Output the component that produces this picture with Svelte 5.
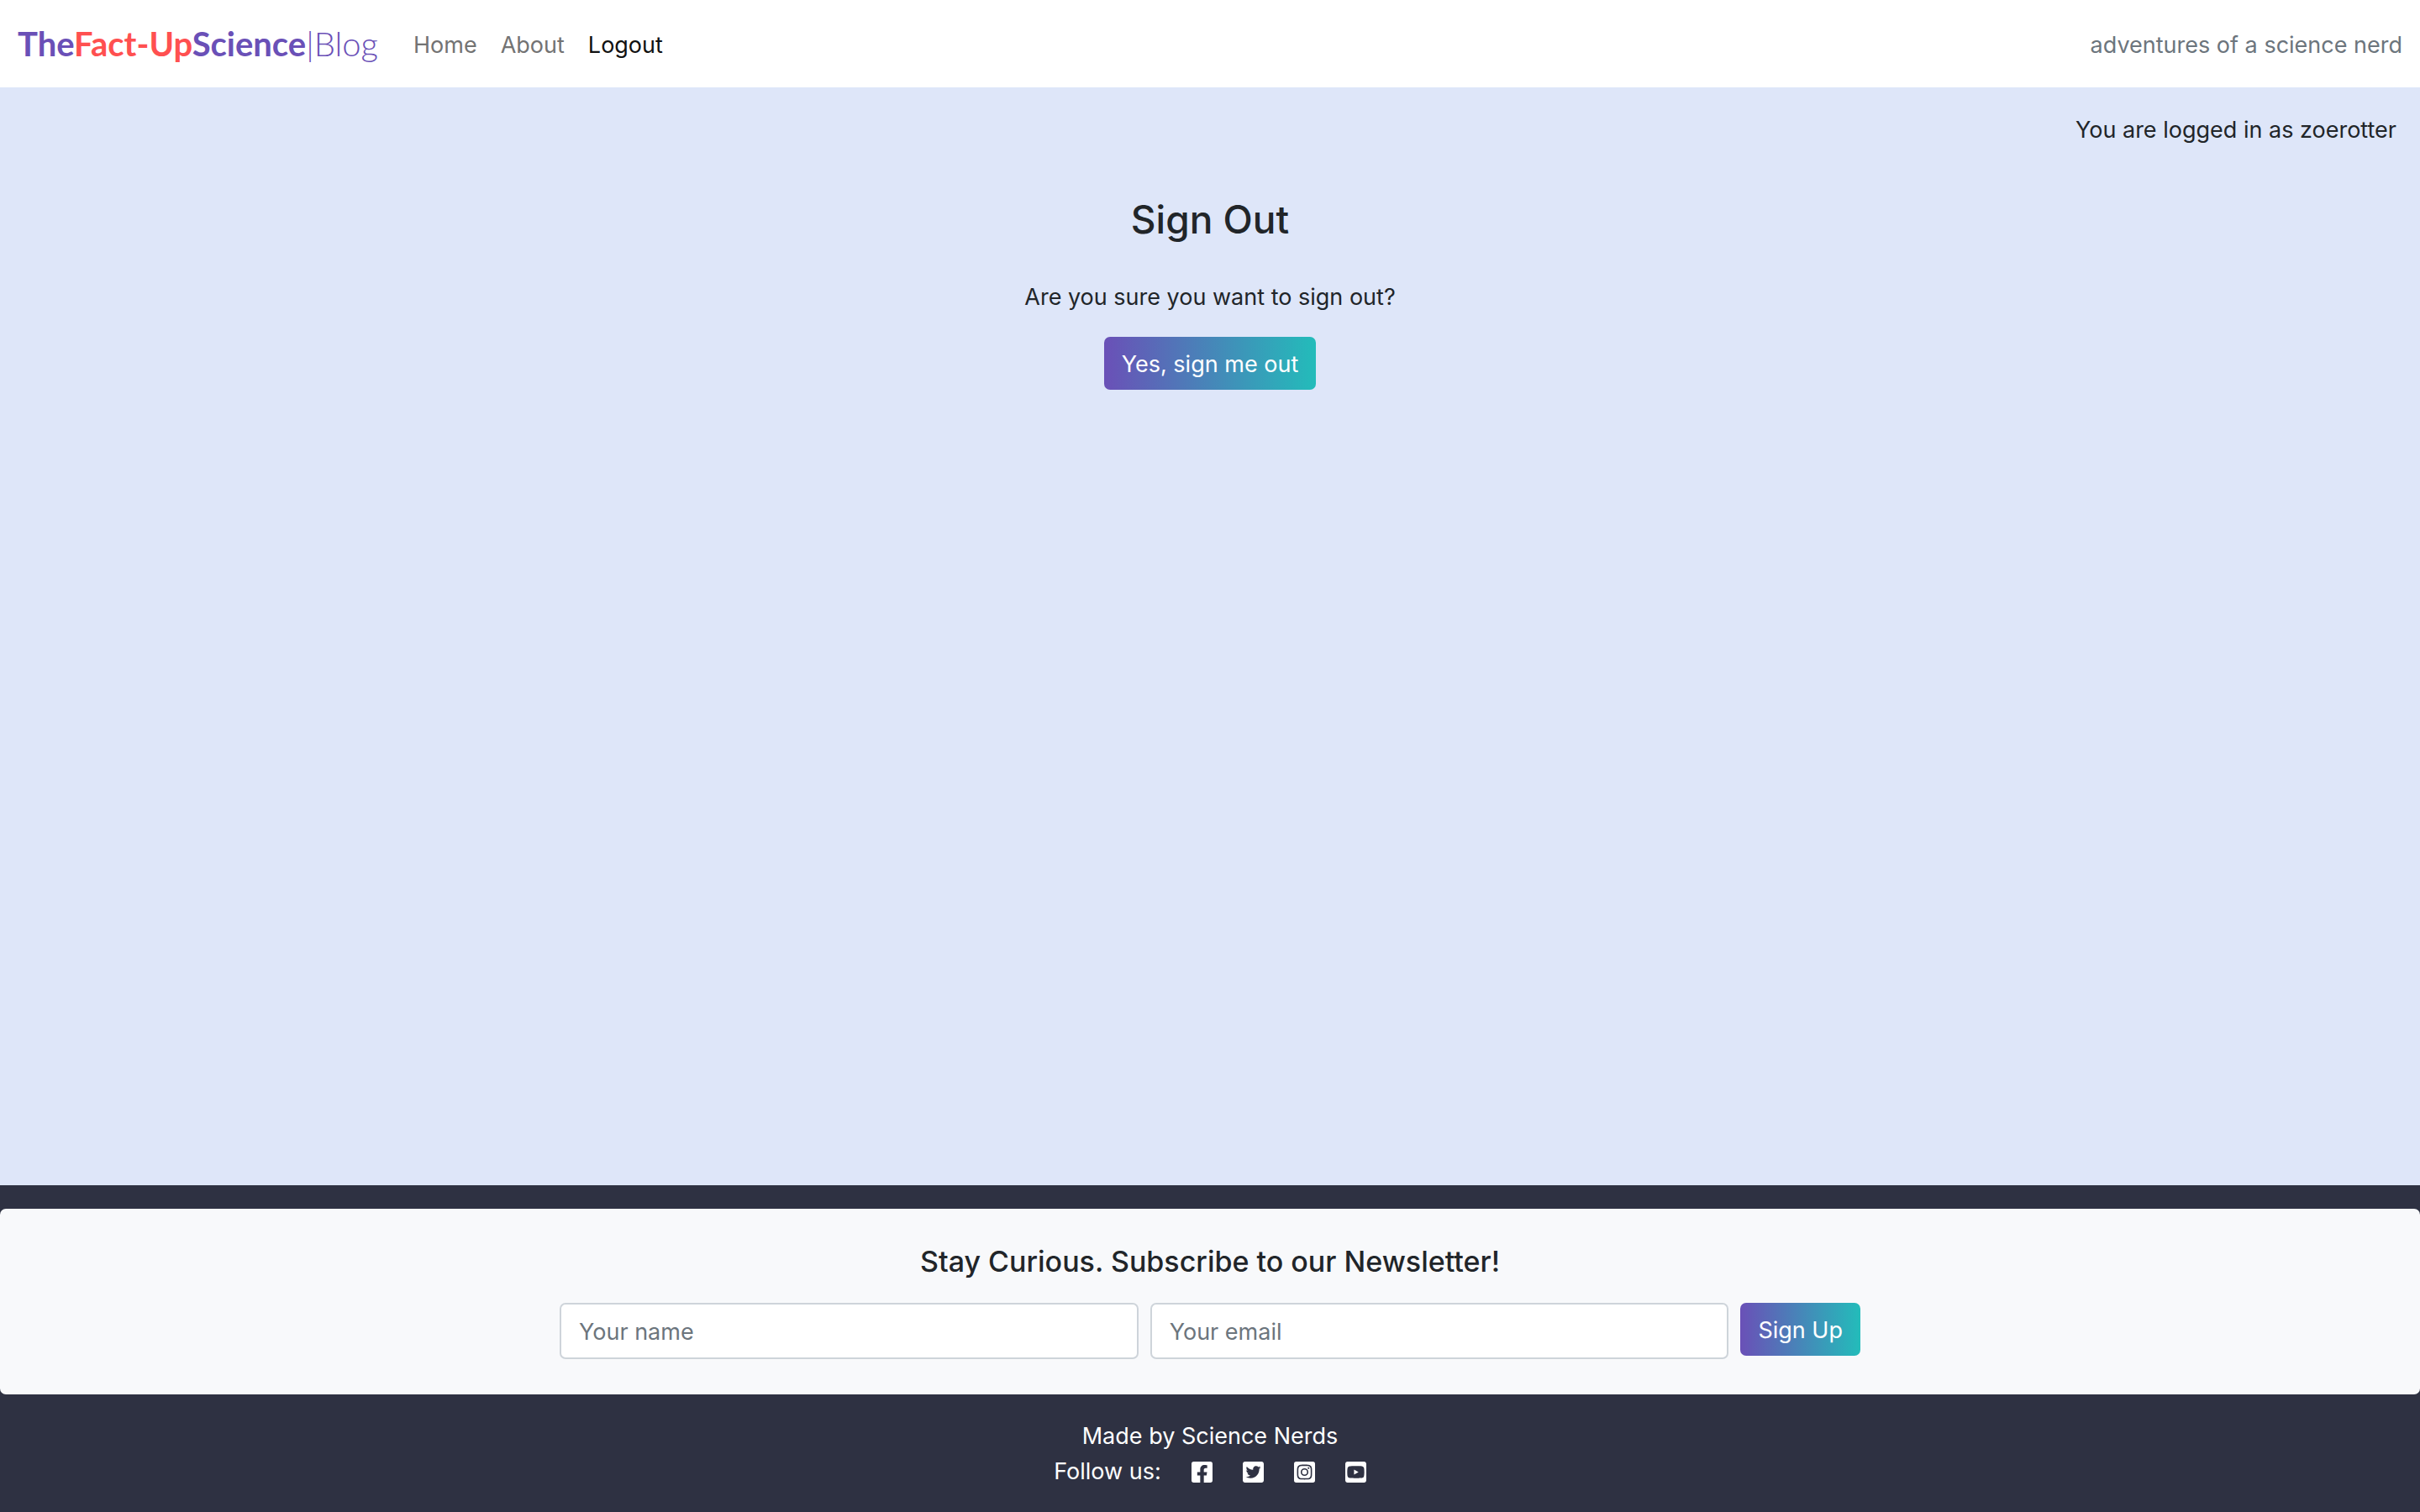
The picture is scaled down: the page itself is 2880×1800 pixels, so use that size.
<script>
  const links = [
    { label: 'Home', active: false },
    { label: 'About', active: false },
    { label: 'Logout', active: true }
  ];

  const socials = [
    {
      name: 'Facebook',
      path: 'M400 32H48A48 48 0 0 0 0 80v352a48 48 0 0 0 48 48h137.25V327.69h-63V256h63v-54.64c0-62.15 37-96.48 93.67-96.48 27.14 0 55.52 4.84 55.52 4.84v61h-31.27c-30.81 0-40.42 19.12-40.42 38.73V256h68.78l-11 71.69h-57.78V480H400a48 48 0 0 0 48-48V80a48 48 0 0 0-48-48z'
    },
    {
      name: 'Twitter',
      path: 'M400 32H48C21.5 32 0 53.5 0 80v352c0 26.5 21.5 48 48 48h352c26.5 0 48-21.5 48-48V80c0-26.5-21.5-48-48-48zm-48.9 158.8c.2 2.8.2 5.7.2 8.5 0 86.7-66 186.6-186.6 186.6-37.2 0-71.7-10.8-100.7-29.4 5.3.6 10.4.8 15.8.8 30.7 0 58.9-10.4 81.4-28-28.8-.6-53-19.5-61.3-45.5 10.1 1.5 19.2 1.5 29.6-1.2-30-6.1-52.5-32.5-52.5-64.4v-.8c8.7 4.9 18.9 7.9 29.6 8.3a65.447 65.447 0 0 1-29.2-54.6c0-12.2 3.2-23.4 8.9-33.1 32.3 39.8 80.8 65.8 135.2 68.6-9.3-44.5 24-80.6 64-80.6 18.9 0 35.9 7.9 47.9 20.7 14.8-2.8 29-8.3 41.6-15.8-4.9 15.2-15.2 28-28.8 36.1 13.2-1.4 26-5.1 37.8-10.2-8.9 13.1-20.1 24.7-32.9 34z'
    },
    {
      name: 'Instagram',
      path: 'M224,202.66A53.34,53.34,0,1,0,277.36,256,53.38,53.38,0,0,0,224,202.66Zm124.71-41a54,54,0,0,0-30.41-30.41c-21-8.29-71-6.43-94.3-6.43s-73.25-1.93-94.31,6.43a54,54,0,0,0-30.41,30.41c-8.28,21-6.43,71.05-6.43,94.33S91,329.26,99.32,350.33a54,54,0,0,0,30.41,30.41c21,8.29,71,6.43,94.31,6.43s73.24,1.93,94.3-6.43a54,54,0,0,0,30.41-30.41c8.35-21,6.43-71.05,6.43-94.33S357.1,182.74,348.75,161.67ZM224,338a82,82,0,1,1,82-82A81.9,81.9,0,0,1,224,338Zm85.38-148.3a19.14,19.14,0,1,1,19.13-19.14A19.1,19.1,0,0,1,309.42,189.74ZM400,32H48A48,48,0,0,0,0,80V432a48,48,0,0,0,48,48H400a48,48,0,0,0,48-48V80A48,48,0,0,0,400,32ZM382.88,322c-1.29,25.63-7.14,48.34-25.85,67s-41.4,24.63-67,25.85c-26.41,1.49-105.59,1.49-132,0-25.63-1.29-48.26-7.15-67-25.85s-24.63-41.42-25.85-67c-1.49-26.42-1.49-105.61,0-132,1.29-25.63,7.07-48.34,25.85-67s41.47-24.56,67-25.78c26.41-1.49,105.59-1.49,132,0,25.63,1.29,48.33,7.15,67,25.85s24.63,41.42,25.85,67.05C384.37,216.44,384.37,295.56,382.88,322Z'
    },
    {
      name: 'YouTube',
      path: 'M186.8 202.1l95.2 54.1-95.2 54.1V202.1zM448 80v352c0 26.5-21.5 48-48 48H48c-26.5 0-48-21.5-48-48V80c0-26.5 21.5-48 48-48h352c26.5 0 48 21.5 48 48zm-42 176.3s0-59.6-7.6-88.2c-4.2-15.8-16.5-28.2-32.2-32.4C337.9 128 224 128 224 128s-113.9 0-142.2 7.7c-15.7 4.2-28 16.6-32.2 32.4-7.6 28.5-7.6 88.2-7.6 88.2s0 59.6 7.6 88.2c4.2 15.8 16.5 27.7 32.2 31.9C110.1 384 224 384 224 384s113.9 0 142.2-7.7c15.7-4.2 28-16.1 32.2-31.9 7.6-28.5 7.6-88.1 7.6-88.1z'
    }
  ];

  const keep = (event) => event.preventDefault();
</script>

<div class="page">
  <header class="navbar">
    <a class="brand" href="#home">The<span class="accent">Fact-Up</span>Science<span class="light">|Blog</span></a>
    <nav class="links" aria-label="Main">
      {#each links as link}
        <a href="#{link.label.toLowerCase()}" class:active={link.active} aria-current={link.active ? 'page' : undefined}>{link.label}</a>
      {/each}
    </nav>
    <span class="tagline">adventures of a science nerd</span>
  </header>

  <main>
    <p class="status">You are logged in as zoerotter</p>
    <form class="signout" onsubmit={keep}>
      <h1>Sign Out</h1>
      <p>Are you sure you want to sign out?</p>
      <button class="btn" type="submit">Yes, sign me out</button>
    </form>
  </main>

  <footer>
    <section class="newsletter">
      <h2>Stay Curious. Subscribe to our Newsletter!</h2>
      <form class="signup" onsubmit={keep}>
        <input type="text" placeholder="Your name" aria-label="Your name" />
        <input type="email" placeholder="Your email" aria-label="Your email" />
        <button class="btn" type="submit">Sign Up</button>
      </form>
    </section>
    <div class="credits">
      <p>Made by Science Nerds</p>
      <div class="follow">
        <span>Follow us:</span>
        <ul>
          {#each socials as social}
            <li>
              <a href="#{social.name.toLowerCase()}" aria-label={social.name}>
                <svg viewBox="0 32 448 448" aria-hidden="true"><path d={social.path} /></svg>
              </a>
            </li>
          {/each}
        </ul>
      </div>
    </div>
  </footer>
</div>

<style>
  :global(body) {
    margin: 0;
  }

  .page {
    display: flex;
    flex-direction: column;
    min-height: 100vh;
    background: #dee6f9;
    color: #212529;
    font-family: Inter, 'Liberation Sans', sans-serif;
    font-size: 27px;
    line-height: 42px;
  }

  h1,
  h2,
  p,
  ul {
    margin: 0;
    padding: 0;
  }

  a {
    text-decoration: none;
  }

  .navbar {
    display: flex;
    align-items: center;
    padding: 20px 21px;
    background: #fff;
  }

  .brand {
    margin-right: 28px;
    color: #6a50b7;
    font-family: Lato, sans-serif;
    font-size: 40px;
    font-weight: 700;
    line-height: 64px;
    white-space: nowrap;
  }

  .accent {
    color: #ff5050;
  }

  .light {
    font-weight: 300;
  }

  .links {
    display: flex;
    flex: 1;
    padding-top: 3px;
  }

  .links a {
    padding: 0 14px;
    color: #737373;
  }

  .links .active {
    color: #111;
  }

  .tagline {
    padding-top: 3px;
    color: #6c757d;
  }

  main {
    flex: 1;
    padding: 30px 28px 28px;
  }

  .status {
    text-align: right;
  }

  .signout {
    display: flex;
    flex-direction: column;
    align-items: center;
    margin-top: 55px;
  }

  h1 {
    margin-bottom: 42px;
    font-size: 46px;
    font-weight: 500;
    line-height: 60px;
  }

  .signout p {
    margin-bottom: 26px;
  }

  .btn {
    padding: 12px 21px 9px;
    border: 0;
    border-radius: 7px;
    background: linear-gradient(90deg, #6a50b7, #23bcba);
    color: #fff;
    font: inherit;
    white-space: nowrap;
    cursor: pointer;
  }

  footer {
    padding: 28px 0 27px;
    background: #2e3142;
    color: #fff;
  }

  .newsletter {
    padding: 42px 28px;
    border-radius: 7px;
    background: #f8f9fb;
    color: #212529;
  }

  h2 {
    margin-bottom: 28px;
    font-size: 34px;
    font-weight: 500;
    line-height: 42px;
    text-align: center;
  }

  .signup {
    display: flex;
    align-items: flex-start;
    gap: 14px;
    max-width: 1548px;
    margin: 0 auto;
  }

  input {
    flex: 1;
    min-width: 0;
    box-sizing: border-box;
    height: 67px;
    padding: 2px 21px 0;
    border: 2px solid #ced4da;
    border-radius: 7px;
    background: #fff;
    color: #212529;
    font: inherit;
  }

  input::placeholder {
    color: #6c757d;
    opacity: 1;
  }

  .credits {
    padding-top: 29px;
    text-align: center;
  }

  .follow {
    display: flex;
    justify-content: center;
    gap: 36px;
  }

  ul {
    display: flex;
    gap: 36px;
    list-style: none;
  }

  li a {
    display: flex;
    align-items: center;
    height: 42px;
  }

  svg {
    display: block;
    width: 25px;
    height: 25px;
    fill: #fff;
  }
</style>
